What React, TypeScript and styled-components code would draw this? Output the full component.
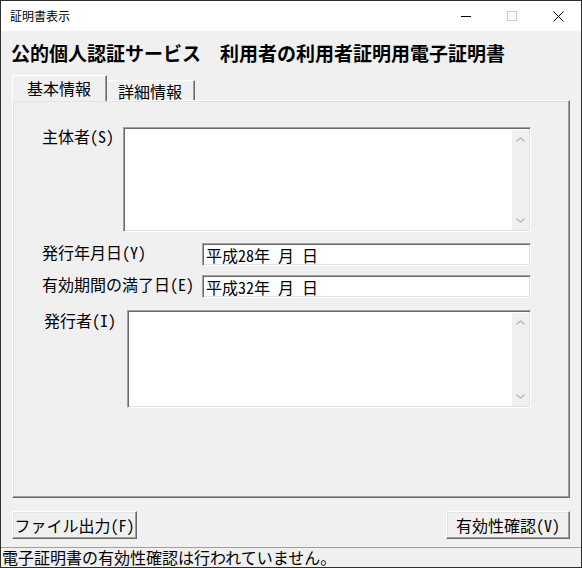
import React from 'react';
import styled, { createGlobalStyle } from 'styled-components';

const Global = createGlobalStyle`
  html, body {
    margin: 0;
    padding: 0;
    background: #ffffff;
  }
  body {
    font-family: "Noto Sans CJK JP", "Noto Sans", sans-serif;
    font-feature-settings: "hwid";
    color: #000;
  }
`;

const sunken = `
  box-sizing: border-box;
  background: #ffffff;
  border-top: 1px solid #a0a0a0;
  border-left: 1px solid #a0a0a0;
  border-right: 1px solid #ffffff;
  border-bottom: 1px solid #ffffff;
  box-shadow: inset 1px 1px 0 #696969, inset -1px -1px 0 #e3e3e3;
`;

const raised = `
  box-sizing: border-box;
  background: #f0f0f0;
  border-top: 1px solid #ffffff;
  border-left: 1px solid #ffffff;
  border-right: 1px solid #696969;
  border-bottom: 1px solid #696969;
  box-shadow: inset -1px -1px 0 #a0a0a0, inset 1px 1px 0 #e3e3e3;
`;

const Window = styled.div`
  width: 582px;
  height: 568px;
  box-sizing: border-box;
  border: 1px solid #2f2f2f;
  background: #f0f0f0;
  display: flex;
  flex-direction: column;
`;

const TitleBar = styled.div`
  height: 30px;
  flex: none;
  display: flex;
  align-items: center;
  background: #ffffff;
  padding-left: 9px;
`;

const Title = styled.span`
  font-size: 12px;
  line-height: 14px;
`;

const Controls = styled.div`
  margin-left: auto;
  display: flex;
  height: 100%;
`;

const ControlButton = styled.div`
  width: 46px;
  height: 100%;
  display: flex;
  align-items: center;
  justify-content: center;
`;

const Body = styled.div`
  flex: 1;
  display: flex;
  flex-direction: column;
  padding: 0 11px;
`;

const Heading = styled.h1`
  margin: 10px 0 0 -1px;
  height: 24px;
  font-size: 19px;
  line-height: 24px;
  font-weight: 700;
  font-feature-settings: normal;
  white-space: nowrap;
`;

const TabRow = styled.div`
  margin-top: 10px;
  height: 25px;
  display: flex;
  align-items: flex-end;
  position: relative;
  z-index: 1;
`;

const Tab = styled.div<{ $active?: boolean }>`
  box-sizing: border-box;
  height: ${p => (p.$active ? 26 : 20)}px;
  margin-bottom: ${p => (p.$active ? -1 : 0)}px;
  padding: ${p => (p.$active ? '3px 15px 0 14px' : '1px 12px 0 11px')};
  background: #f0f0f0;
  border-top: 1px solid #ffffff;
  border-left: ${p => (p.$active ? '1px solid #ffffff' : 'none')};
  border-right: 1px solid #696969;
  box-shadow: inset -1px 0 0 #a0a0a0;
  font-size: 16px;
  line-height: 18px;
  white-space: nowrap;
`;

const Panel = styled.div`
  ${raised};
  height: 398px;
  display: flex;
  flex-direction: column;
  padding: 26px 38px 0 29px;
`;

const FieldRow = styled.div<{ $gap: number; $height: number }>`
  margin-top: ${p => p.$gap}px;
  height: ${p => p.$height}px;
  display: flex;
  align-items: flex-start;
`;

const Label = styled.div<{ $width: number; $indent?: number; $drop?: number }>`
  flex: none;
  width: ${p => p.$width}px;
  margin-left: ${p => p.$indent ?? 0}px;
  padding-top: ${p => p.$drop ?? 0}px;
  font-size: 16px;
  line-height: 18px;
  white-space: nowrap;
`;

const MemoBox = styled.div`
  ${sunken};
  flex: 1;
  height: 100%;
  display: flex;
  justify-content: flex-end;
  padding: 2px 1px 1px 2px;
`;

const ScrollTrack = styled.div`
  width: 17px;
  background: #f0f0f0;
  display: flex;
  flex-direction: column;
  align-items: center;
  justify-content: space-between;
  padding: 7px 0 7px;
  box-sizing: border-box;
`;

const TextField = styled.div`
  ${sunken};
  flex: 1;
  height: 100%;
  padding: 1px 3px 0;
  font-size: 16px;
  line-height: 21px;
  white-space: pre;
`;

const ButtonRow = styled.div`
  margin-top: 13px;
  display: flex;
  justify-content: space-between;
`;

const Button = styled.div<{ $width: number }>`
  ${raised};
  width: ${p => p.$width}px;
  height: 28px;
  display: flex;
  align-items: center;
  justify-content: center;
  font-size: 16px;
  line-height: 18px;
  white-space: nowrap;
`;

const StatusBar = styled.div`
  margin-top: 8px;
  height: 20px;
  box-sizing: border-box;
  border-top: 1px solid #a0a0a0;
  padding-left: 1px;
  font-size: 16px;
  line-height: 18px;
  white-space: nowrap;
`;

const Chevron: React.FC<{ up?: boolean }> = ({ up }) => (
  <svg width="9" height="5" viewBox="0 0 9 5">
    <path
      d={up ? 'M0.5 4.5 L4.5 0.8 L8.5 4.5' : 'M0.5 0.5 L4.5 4.2 L8.5 0.5'}
      fill="none"
      stroke="#b4b4b4"
      strokeWidth="1.2"
    />
  </svg>
);

const Memo: React.FC = () => (
  <MemoBox>
    <ScrollTrack>
      <Chevron up />
      <Chevron />
    </ScrollTrack>
  </MemoBox>
);

const App: React.FC = () => (
  <>
    <Global />
    <Window>
      <TitleBar>
        <Title>証明書表示</Title>
        <Controls>
          <ControlButton>
            <svg width="10" height="10" viewBox="0 0 10 10">
              <path d="M0 5.5 H10" stroke="#000" strokeWidth="1" />
            </svg>
          </ControlButton>
          <ControlButton>
            <svg width="10" height="10" viewBox="0 0 10 10">
              <rect x="0.5" y="0.5" width="9" height="9" fill="none" stroke="#cccccc" strokeWidth="1" />
            </svg>
          </ControlButton>
          <ControlButton>
            <svg width="11" height="11" viewBox="0 0 11 11">
              <path d="M0.5 0.5 L10.5 10.5 M10.5 0.5 L0.5 10.5" stroke="#000" strokeWidth="1" />
            </svg>
          </ControlButton>
        </Controls>
      </TitleBar>

      <Body>
        <Heading>公的個人認証サービス　利用者の利用者証明用電子証明書</Heading>

        <TabRow>
          <Tab $active>基本情報</Tab>
          <Tab>詳細情報</Tab>
        </TabRow>

        <Panel>
          <FieldRow $gap={0} $height={105}>
            <Label $width={81}>主体者(S)</Label>
            <Memo />
          </FieldRow>
          <FieldRow $gap={11} $height={23}>
            <Label $width={160}>発行年月日(Y)</Label>
            <TextField>平成28年 月 日</TextField>
          </FieldRow>
          <FieldRow $gap={9} $height={23}>
            <Label $width={160}>有効期間の満了日(E)</Label>
            <TextField>平成32年 月 日</TextField>
          </FieldRow>
          <FieldRow $gap={12} $height={98}>
            <Label $width={83} $indent={2} $drop={1}>発行者(I)</Label>
            <Memo />
          </FieldRow>
        </Panel>

        <ButtonRow>
          <Button $width={125}>ファイル出力(F)</Button>
          <Button $width={124}>有効性確認(V)</Button>
        </ButtonRow>
      </Body>

      <StatusBar>電子証明書の有効性確認は行われていません。</StatusBar>
    </Window>
  </>
);

export default App;
